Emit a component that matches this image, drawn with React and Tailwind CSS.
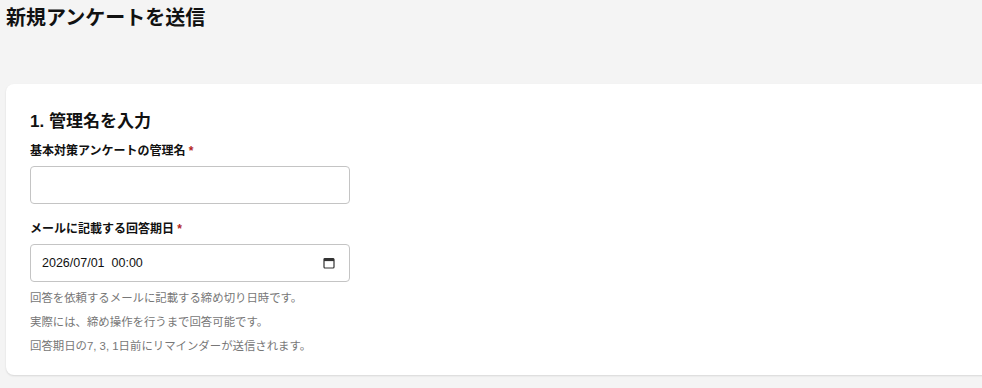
import { useState } from "react";

const jp = "font-['Liberation_Sans','Noto_Sans_CJK_JP',sans-serif]";

function CalendarIcon() {
  return (
    <svg width="12" height="12" viewBox="0 0 12 12" fill="none">
      <rect x="1" y="1.5" width="10" height="9.5" rx="1" stroke="#333" strokeWidth="1.2" />
      <rect x="1" y="1.5" width="10" height="2.6" fill="#333" />
    </svg>
  );
}

export default function App() {
  const [name, setName] = useState("");

  return (
    <div className={`min-h-[388px] w-[982px] overflow-hidden bg-[#f4f4f4] text-[#111] ${jp}`}>
      <h1 className="pl-[6px] pt-[4px] text-[20px] font-bold leading-[28px]">新規アンケートを送信</h1>

      <div className="mt-[52px] ml-[6px] w-[1000px] rounded-[8px] bg-white px-6 pt-[26px] pb-[17px] shadow-[0_1px_2px_rgba(0,0,0,0.12)]">
        <h2 className="text-[17px] font-semibold leading-[24px]">1. 管理名を入力</h2>

        <label className="mt-[8px] block text-[12px] font-semibold leading-[18px]">
          基本対策アンケートの管理名 <span className="text-[#b3261e]">*</span>
        </label>
        <input
          value={name}
          onChange={(e) => setName(e.target.value)}
          className="mt-[6px] block h-[38px] w-[320px] rounded-[4px] border border-[#c4c4c4] bg-white px-3 text-[12px] outline-none"
        />

        <label className="mt-[16px] block text-[12px] font-semibold leading-[18px]">
          メールに記載する回答期日 <span className="text-[#b3261e]">*</span>
        </label>
        <div className="mt-[6px] flex h-[38px] w-[320px] items-center justify-between rounded-[4px] border border-[#c4c4c4] bg-white pl-[11px] pr-[14px]">
          <span className="text-[12.5px] text-[#111] whitespace-pre">2026/07/01  00:00</span>
          <CalendarIcon />
        </div>

        <div className="mt-[4px] text-[11.4px] leading-[24px] text-[#777]">
          <p>回答を依頼するメールに記載する締め切り日時です。</p>
          <p>実際には、締め操作を行うまで回答可能です。</p>
          <p>回答期日の7, 3, 1日前にリマインダーが送信されます。</p>
        </div>
      </div>
    </div>
  );
}
